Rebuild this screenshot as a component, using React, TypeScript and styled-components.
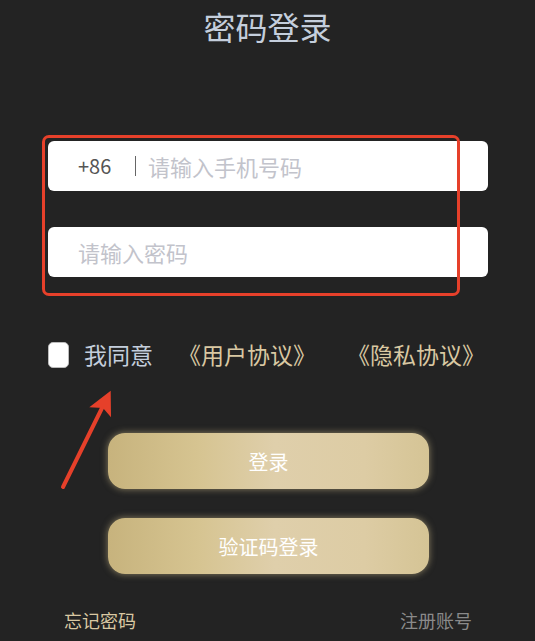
import React from 'react';
import styled, { createGlobalStyle } from 'styled-components';

const GlobalStyle = createGlobalStyle`
  html, body {
    margin: 0;
    padding: 0;
    background: #232323;
  }
  body {
    font-family: "Noto Sans CJK SC", "Noto Sans", sans-serif;
  }
`;

const Page = styled.main`
  position: relative;
  width: 535px;
  height: 641px;
  overflow: hidden;
  background: #232323;
  display: flex;
  flex-direction: column;
`;

const Title = styled.h1`
  margin: 10px 0 0;
  font-size: 32px;
  line-height: 32px;
  font-weight: 400;
  text-align: center;
  color: #c4cedc;
`;

const Form = styled.section`
  position: relative;
  margin: 99px 0 0 48px;
  width: 440px;
  display: flex;
  flex-direction: column;
  gap: 36px;
`;

const Field = styled.label`
  height: 50px;
  background: #fff;
  border-radius: 6px;
  display: flex;
  align-items: center;
  padding-left: 30px;
`;

const Prefix = styled.span`
  color: #555;
  font-size: 20px;
  padding-right: 12px;
  margin-right: 12px;
  border-right: 1px solid #666;
  line-height: 20px;
  width: 45px;
`;

const Placeholder = styled.span`
  color: #c2c3cb;
  font-size: 22px;
`;

const Highlight = styled.div`
  position: absolute;
  left: -6px;
  top: -6px;
  width: 418px;
  height: 161px;
  box-sizing: border-box;
  border: 3px solid #e6402a;
  border-radius: 7px;
  pointer-events: none;
`;

const AgreeRow = styled.div`
  margin: 65px 0 0 48px;
  height: 26px;
  display: flex;
  align-items: center;
  font-size: 23px;
  line-height: 26px;
`;

const Check = styled.span`
  width: 21px;
  height: 26px;
  box-sizing: border-box;
  background: #fff;
  border: 1px solid #bbb;
  border-radius: 5px;
  margin-right: 15px;
`;

const AgreeText = styled.span`
  color: #c4cedc;
  margin-right: 25px;
  margin-top: -3px;
`;

const Link = styled.span<{ $gap?: number }>`
  color: #d9c8a2;
  margin-left: ${(p) => p.$gap ?? 0}px;
  margin-top: -3px;
`;

const Buttons = styled.div`
  margin: 65px 0 0 108px;
  display: flex;
  flex-direction: column;
  gap: 29px;
`;

const GoldButton = styled.button`
  width: 321px;
  height: 56px;
  border: none;
  border-radius: 17px;
  background: linear-gradient(
    90deg,
    #c7b37d 0%,
    #d6c491 28%,
    #dfcfab 52%,
    #ddcca4 80%,
    #d5c495 100%
  );
  box-shadow: 0 0 7px rgba(226, 206, 150, 0.55);
  color: #fff;
  font-family: inherit;
  font-size: 20px;
  cursor: pointer;
`;

const Footer = styled.footer`
  margin: 36px 63px 0 64px;
  display: flex;
  justify-content: space-between;
  font-size: 18px;
  line-height: 20px;
`;

const FooterLink = styled.span<{ $muted?: boolean }>`
  color: ${(p) => (p.$muted ? '#8a8a8a' : '#d9c8a2')};
`;

const Arrow = styled.svg`
  position: absolute;
  left: 50px;
  top: 380px;
`;

export default function App() {
  return (
    <>
      <GlobalStyle />
      <Page>
        <Title>密码登录</Title>
        <Form>
          <Field>
            <Prefix>+86</Prefix>
            <Placeholder>请输入手机号码</Placeholder>
          </Field>
          <Field>
            <Placeholder>请输入密码</Placeholder>
          </Field>
          <Highlight />
        </Form>
        <AgreeRow>
          <Check />
          <AgreeText>我同意</AgreeText>
          <Link>《用户协议》</Link>
          <Link $gap={31}>《隐私协议》</Link>
        </AgreeRow>
        <Buttons>
          <GoldButton>登录</GoldButton>
          <GoldButton>验证码登录</GoldButton>
        </Buttons>
        <Footer>
          <FooterLink>忘记密码</FooterLink>
          <FooterLink $muted>注册账号</FooterLink>
        </Footer>
        <Arrow width="70" height="115" viewBox="0 0 70 115">
          <line x1="13" y1="107" x2="54" y2="24" stroke="#e6402a" strokeWidth="4" strokeLinecap="round" />
          <polygon points="60.7,10.7 39.3,27.3 53,28 61,37.3" fill="#e6402a" />
        </Arrow>
      </Page>
    </>
  );
}
